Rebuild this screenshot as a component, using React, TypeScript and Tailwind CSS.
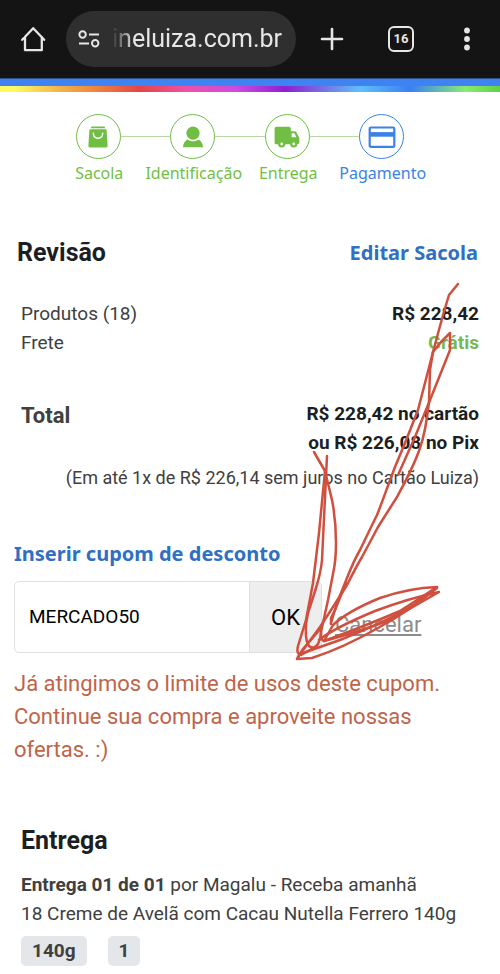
import React, { useState } from 'react';

interface Step {
  label: string;
  icon: React.ReactNode;
  active?: boolean;
}

const BagIcon = () => (
  <svg viewBox="0 0 24 24" className="h-6 w-6" fill="currentColor">
    <path d="M5 2.6Q5 1.6 6 1.6H18Q19 1.6 19 2.6V3.2H5Z" />
    <path d="M4.5 4.2H19.5Q20.5 4.2 20.6 5.2L21.6 20.8Q21.7 22.4 20.1 22.4H3.9Q2.3 22.4 2.4 20.8L3.4 5.2Q3.5 4.2 4.5 4.2Z" />
    <path d="M7.3 8.3C7.7 15 16.3 15 16.7 8.3" fill="none" stroke="#fff" strokeWidth="1.5" strokeLinecap="round" />
  </svg>
);

const PersonIcon = () => (
  <svg viewBox="0 0 24 24" className="h-6 w-6" fill="currentColor">
    <circle cx="12" cy="8.2" r="6.6" />
    <path d="M2 22.3C2 18.4 4 15.8 6.4 14.4C9.7 16.8 14.3 16.8 17.6 14.4C20 15.8 22 18.4 22 22.3Z" />
  </svg>
);

const TruckIcon = () => (
  <svg viewBox="0 0 26 24" className="h-6 w-[26px]" fill="currentColor">
    <path d="M2.5 1.8H15Q16.8 1.8 16.8 3.6V6.3H20.6Q21.7 6.3 22.3 7.3L25 12.3Q25.4 13 25.4 13.8V17.1Q25.4 19.3 23.3 19.3H1.9Q.6 19.3 .6 17.8V3.7Q.6 1.8 2.5 1.8Z" />
    <path d="M17.6 8.3H20.4L22.3 12.3H17.6Z" fill="#fff" />
    <circle cx="7.7" cy="19" r="2.5" fill="#fff" stroke="currentColor" strokeWidth="2.2" />
    <circle cx="19.7" cy="19" r="2.5" fill="#fff" stroke="currentColor" strokeWidth="2.2" />
  </svg>
);

const CardIcon = () => (
  <svg viewBox="0 0 28 24" className="h-6 w-7" fill="none">
    <rect x="1.7" y="2.5" width="24.6" height="19.4" rx="1.2" stroke="currentColor" strokeWidth="2.2" />
    <path d="M1.5 9.4H26.5" stroke="currentColor" strokeWidth="4.6" />
  </svg>
);

const steps: Step[] = [
  { label: 'Sacola', icon: <BagIcon /> },
  { label: 'Identificação', icon: <PersonIcon /> },
  { label: 'Entrega', icon: <TruckIcon /> },
  { label: 'Pagamento', icon: <CardIcon />, active: true },
];

const BrowserBar = () => {
  const [url, setUrl] = useState('ineluiza.com.br');

  return (
    <header className="flex h-[78px] items-center bg-[#141414] px-5 text-[#e6e6e6]">
      <button aria-label="Home">
        <svg viewBox="0 0 26 26" className="h-[26px] w-[26px]" fill="none" stroke="currentColor" strokeWidth="2.3" strokeLinejoin="round" strokeLinecap="round">
          <path d="M2.2 13.8L13.2 2.2L24.2 13.8M5 11V24.2H21.8V11" />
        </svg>
      </button>
      <div className="ml-5 flex h-14 flex-1 items-center rounded-full bg-[#2f2f2f] pl-3">
        <svg viewBox="0 0 22 18" className="h-[18px] w-[22px] shrink-0" fill="none" stroke="currentColor" strokeWidth="2">
          <circle cx="4.6" cy="4.5" r="3.2" />
          <path d="M11 4.5H21M1 13.5H11" />
          <circle cx="17.2" cy="13.3" r="3.2" />
        </svg>
        <input
          type="text"
          aria-label="Endereço"
          value={url}
          onChange={(e) => setUrl(e.target.value)}
          className="ml-3 w-full min-w-0 bg-transparent text-[25px] text-[#e6e6e6] outline-none [mask-image:linear-gradient(to_right,transparent_0px,black_22px)]"
        />
      </div>
      <button aria-label="Nova guia" className="ml-6">
        <svg viewBox="0 0 24 24" className="h-6 w-6" fill="none" stroke="currentColor" strokeWidth="2.6" strokeLinecap="round">
          <path d="M12 2V22M2 12H22" />
        </svg>
      </button>
      <button aria-label="Guias" className="ml-11 flex h-[26px] w-[26px] items-center justify-center rounded-[6px] border-2 border-current text-[13px] font-bold">
        16
      </button>
      <button aria-label="Menu" className="ml-10">
        <svg viewBox="0 0 26 26" className="h-[26px] w-[26px]" fill="currentColor">
          <circle cx="13" cy="4.5" r="2.9" />
          <circle cx="13" cy="13" r="2.9" />
          <circle cx="13" cy="21.5" r="2.9" />
        </svg>
      </button>
    </header>
  );
};

const Steps = () => (
  <ol className="flex pl-[51px] pr-[71px] pt-[22px]">
    {steps.map((step, index) => (
      <li key={step.label} className={`flex min-w-0 flex-1 flex-col items-center ${step.active ? 'text-[#3b82e6]' : 'text-[#70bf44]'}`}>
        <div className="flex w-full items-center">
          <span className={`h-px flex-1 ${index > 0 ? 'bg-[#b5d8a3]' : ''}`} />
          <span className="flex h-[45px] w-[45px] items-center justify-center rounded-full border border-current">{step.icon}</span>
          <span className={`h-px flex-1 ${index < steps.length - 1 ? 'bg-[#b5d8a3]' : ''}`} />
        </div>
        <span className="mt-[2px] whitespace-nowrap pl-[2px] font-['Noto_Sans',sans-serif] text-[16px] leading-6">{step.label}</span>
      </li>
    ))}
  </ol>
);

// Hand-drawn arrow on top of the page
const RedArrow = () => (
  <svg viewBox="0 0 500 974" className="pointer-events-none absolute left-0 top-0 h-[974px] w-[500px]" fill="none" stroke="#d04f3e" strokeWidth="2.5" strokeLinecap="round" strokeLinejoin="round">
    {/* shaft */}
    <path d="M458 284L449 295L443 315L433 352L418 410L405 443L395 467C388 485 382 503 377 515C371 527 365 540 360 550C353 562 349 573 345 583L337 603L331 623" />
    <path d="M433 352L441 342L450 333V350L430 400L415 437L398 475" />
    <path d="M433 352L430 370L429 402C427 420 425 434 420 448C414 466 404 484 397 497L378 527L362 557C356 567 351 577 347 585L333 607L320 627L298 657" />
    <path d="M331 624V618L335 610L346 583" />
    {/* left side of the head */}
    <path d="M314 452L325 471L332 500C335 515 336 530 336 543C336 556 335 565 333 574L328 600L321 632Q321 638 318 644Q314 650 309 646Q305 641 306 624L308 613L316 588Q321 572 322 560L327 456" />
    <path d="M325 471L319 533L313 583L306 620L298 646Q296 654 301 655L317 646" />
    {/* right side of the head */}
    <path d="M321 632Q321 641 324 641L333 625Q348 611 380 598Q409 588 437 587L415 604Q388 621 340 640L300 654" />
    <path d="M319 640Q334 628 375 611Q410 598 439 592L390 620Q355 633 324 641" />
    <path d="M324 641Q365 626 400 611L437 587M437 588Q409 611 378 628Q343 648 312 658L297 659L303 649L322 627" />
  </svg>
);

const App: React.FC = () => {
  const [coupon, setCoupon] = useState('MERCADO50');

  return (
    <div className="relative overflow-hidden bg-white font-[Roboto,sans-serif] text-[#404040]">
      <BrowserBar />
      <div className="h-2 border-t border-[#2c5087] bg-[#3f83f3]" />
      <div className="h-[6px] bg-[linear-gradient(to_right,#fdfb60_0%,#fdfb60_3%,#f2b34a_12%,#ef8c3c_18%,#e54545_28%,#ee50a5_37%,#d04be0_47%,#8e20d0_57%,#5ec0f8_72%,#3b7ff5_82%,#8bea73_93%,#5fd344_100%)]" />

      <main>
        <Steps />

        {/* Order review */}
        <section className="mt-[52px]">
          <div className="flex items-center justify-between pl-[17px] pr-[22px]">
            <h2 className="text-[25px] font-bold leading-8 text-[#1b1f24]">Revisão</h2>
            <a href="#sacola" className="font-['Noto_Sans',sans-serif] text-[20px] font-bold leading-8 text-[#2f6fc4]">Editar Sacola</a>
          </div>

          <dl className="mt-[30px] px-[21px] text-[19px] leading-[29px]">
            <div className="flex justify-between">
              <dt>Produtos (18)</dt>
              <dd className="font-bold text-[#1b1f24]">R$ 228,42</dd>
            </div>
            <div className="flex justify-between">
              <dt>Frete</dt>
              <dd className="font-bold text-[#76b852]">Grátis</dd>
            </div>
            <div className="mt-[42px] flex justify-between">
              <dt className="pt-[2px] text-[22px] font-bold">Total</dt>
              <dd className="text-right font-bold text-[#1b1f24]">
                R$ 228,42 no cartão
                <br />
                ou R$ 226,08 no Pix
              </dd>
            </div>
          </dl>
          <p className="mt-[7px] whitespace-nowrap pr-[21px] text-right text-[18px] leading-[28px]">
            (Em até 1x de R$ 226,14 sem juros no Cartão Luiza)
          </p>
        </section>

        {/* Coupon */}
        <section className="mt-[46px] px-[14px]">
          <label htmlFor="coupon" className="block font-['Noto_Sans',sans-serif] text-[20px] font-bold leading-8 text-[#2f6fc4]">
            Inserir cupom de desconto
          </label>
          <form className="mt-[11px] flex items-center" onSubmit={(e) => e.preventDefault()}>
            <div className="flex h-[72px] w-[308px] overflow-hidden rounded-[5px] border border-[#e0e0e0]">
              <input
                id="coupon"
                type="text"
                value={coupon}
                onChange={(e) => setCoupon(e.target.value)}
                className="min-w-0 flex-1 pl-[14px] text-[19px] text-black outline-none"
              />
              <button type="submit" className="w-[72px] border-l border-[#e0e0e0] bg-[#eeeeee] text-[22px] text-black">OK</button>
            </div>
            <button type="button" className="ml-[13px] mt-4 text-[22px] leading-8 text-[#8c8c8c] underline">Cancelar</button>
          </form>
          <p className="mt-[14px] text-[22px] leading-[33px] text-[#bf6449]">
            Já atingimos o limite de usos deste cupom.
            <br />
            Continue sua compra e aproveite nossas
            <br />
            ofertas. :)
          </p>
        </section>

        {/* Delivery */}
        <section className="mt-[59px] px-[21px] pb-2">
          <h2 className="text-[25px] font-bold leading-8 text-[#1b1f24]">Entrega</h2>
          <div className="mt-[13px] whitespace-nowrap text-[19px] leading-[29px]">
            <p>
              <strong>Entrega 01 de 01</strong> por Magalu - Receba amanhã
            </p>
            <p>18 Creme de Avelã com Cacau Nutella Ferrero 140g</p>
          </div>
          <div className="mt-2 flex gap-[21px] text-[19px] font-bold leading-[30px]">
            <span className="rounded-[5px] bg-[#e3e7ea] px-[11px]">140g</span>
            <span className="rounded-[5px] bg-[#e3e7ea] px-[11px]">1</span>
          </div>
        </section>
      </main>

      <RedArrow />
    </div>
  );
};

export default App;
